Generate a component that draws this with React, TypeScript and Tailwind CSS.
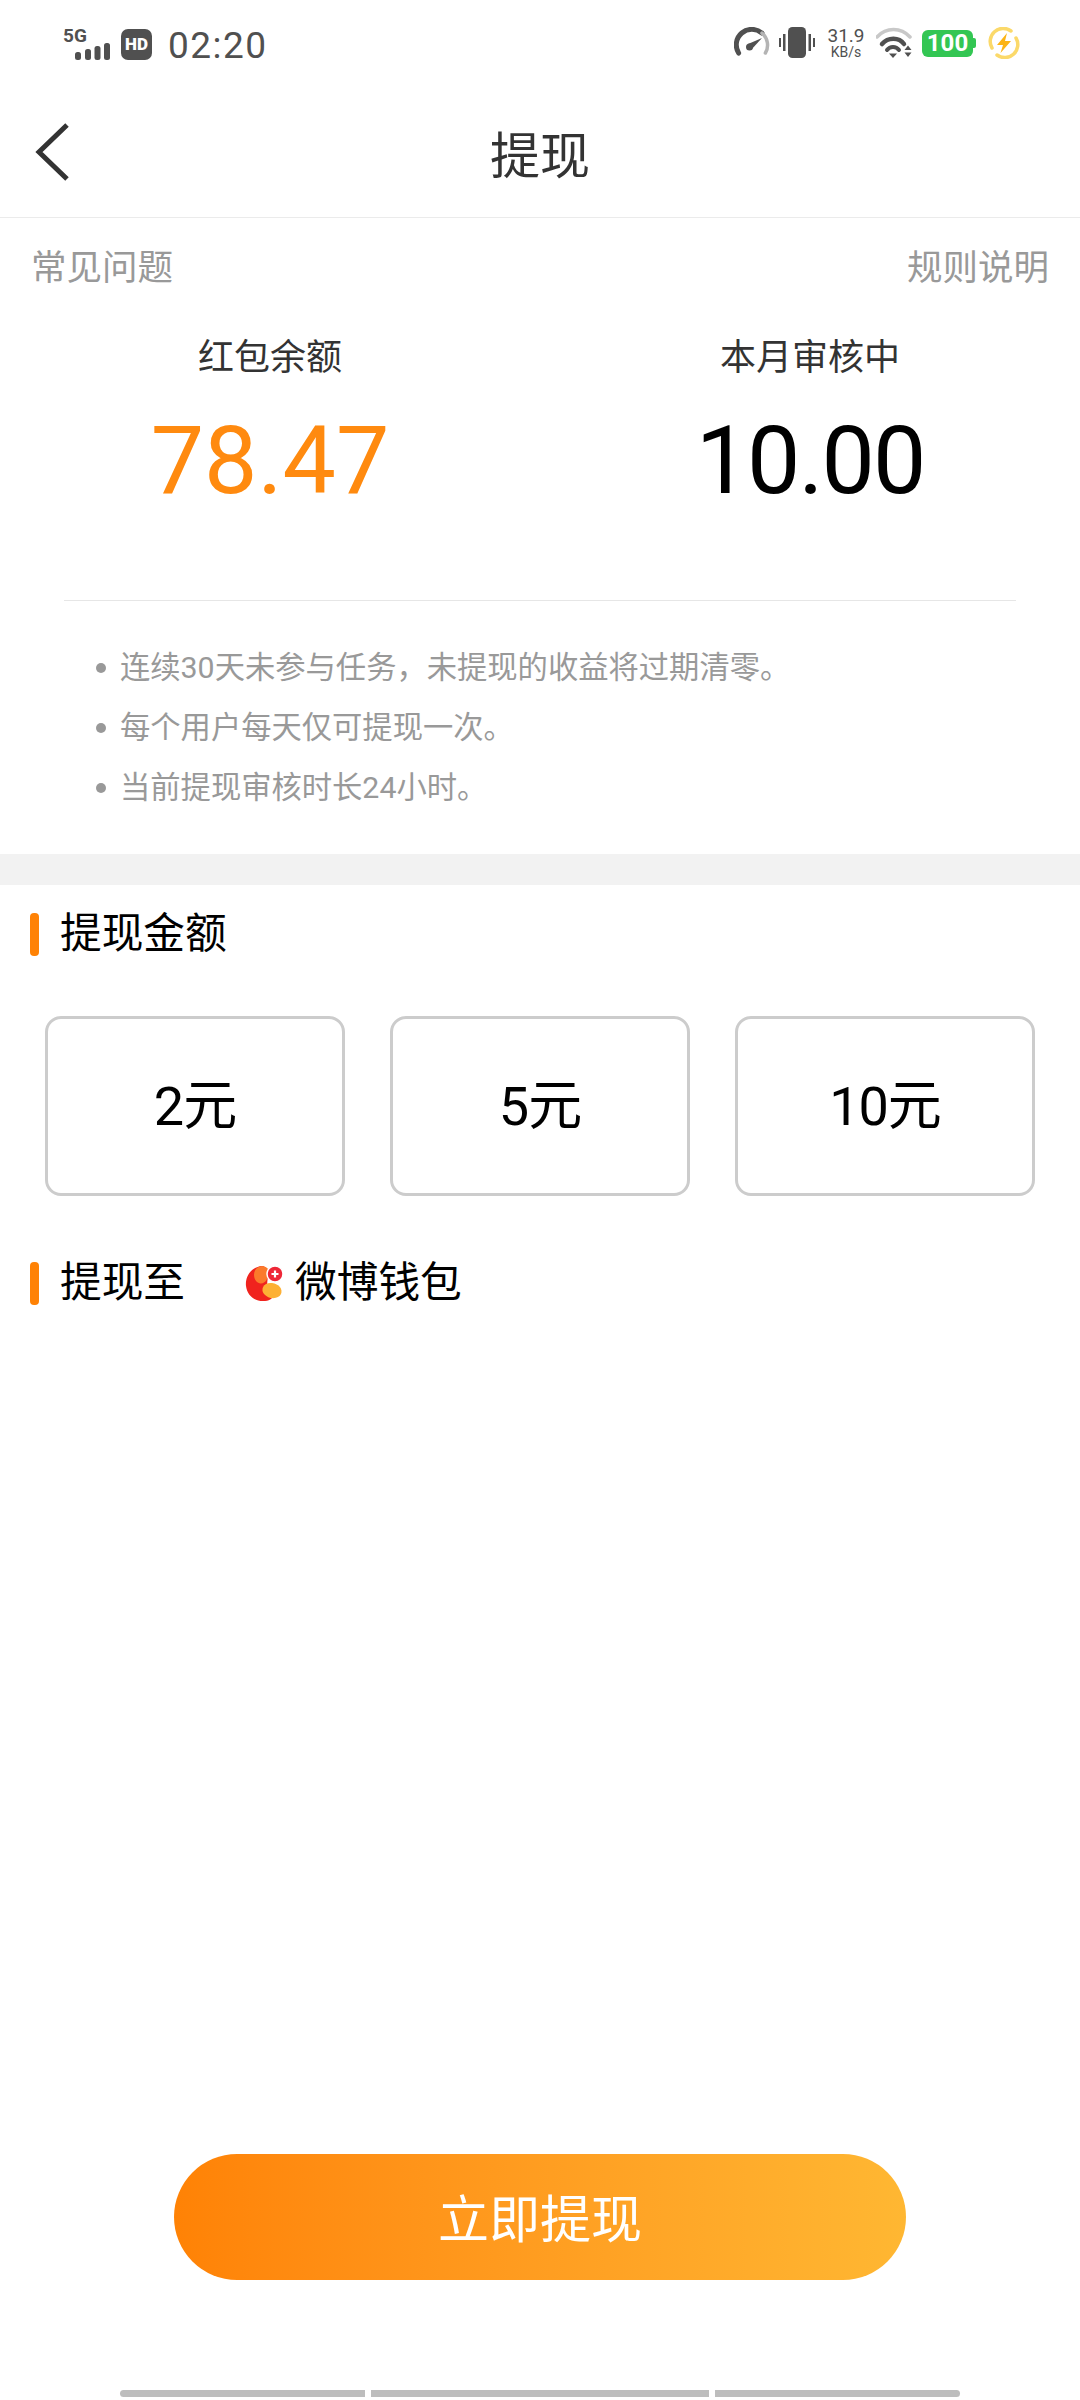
const font = { fontFamily: '"Roboto","Noto Sans CJK SC",sans-serif' };

function Signal() {
  return (
    <div className="flex flex-col w-[48px]">
      <span className="h-[14px] text-[19px] leading-[14px] font-bold text-[#505050]">5G</span>
      <svg width="48" height="18" viewBox="0 14 48 18" className="block">
        <rect x="12" y="23" width="6" height="8" rx="2.5" fill="#505050" />
        <rect x="22" y="20" width="6" height="11" rx="2.5" fill="#505050" />
        <rect x="31.5" y="17" width="6" height="14" rx="2.5" fill="#505050" />
        <rect x="41" y="14" width="6" height="17" rx="2.5" fill="#505050" />
      </svg>
    </div>
  );
}

function Gauge() {
  return (
    <svg width="38" height="32" viewBox="0 0 38 32" fill="none" className="block">
      <path d="M4.6 26A15.5 15.5 0 0 1 28 6.2" stroke="#505050" strokeWidth="5" strokeLinecap="round" />
      <path d="M28 6.2A15.5 15.5 0 0 1 31.4 26" stroke="#b4b4b4" strokeWidth="3.5" strokeLinecap="round" />
      <path d="M14 17L28 11L17 23Z" fill="#505050" />
      <circle cx="15.5" cy="20" r="3.5" fill="#505050" />
    </svg>
  );
}

function Vibrate() {
  return (
    <svg width="36" height="32" viewBox="0 0 36 32" className="block">
      <rect x="9" y="0" width="18" height="31" rx="4.5" fill="#505050" />
      <rect x="0" y="11" width="2" height="9" fill="#505050" />
      <rect x="4" y="7" width="2.5" height="17" fill="#505050" />
      <rect x="29.5" y="7" width="2.5" height="17" fill="#505050" />
      <rect x="34" y="11" width="2" height="9" fill="#505050" />
    </svg>
  );
}

function Wifi() {
  return (
    <svg width="38" height="32" viewBox="0 0 38 32" fill="none" className="block">
      <path d="M1 10C10 0 25 0 34 10" stroke="#c8c8c8" strokeWidth="3.5" strokeLinecap="round" />
      <path d="M6 17C12 10 23 10 28 17" stroke="#505050" strokeWidth="4.5" strokeLinecap="round" />
      <path d="M11 23C14 19 20 19 23 23" stroke="#505050" strokeWidth="4" strokeLinecap="round" />
      <path d="M13 26.5H21L17 31Z" fill="#505050" />
      <path d="M32 18.5L35.5 23H28.5Z M28.5 25.5H35.5L32 30Z" fill="#505050" />
    </svg>
  );
}

function Bolt() {
  return (
    <svg width="32" height="32" viewBox="0 0 32 32" fill="none" className="block">
      <path d="M4 21A13 13 0 0 1 23 4" stroke="#fbd96a" strokeWidth="3.5" strokeLinecap="round" />
      <path d="M28 11A13 13 0 0 1 9 28" stroke="#fbd96a" strokeWidth="3.5" strokeLinecap="round" />
      <path d="M19 6L9 18H15L12.5 26L23 14H17Z" fill="#fcb415" />
    </svg>
  );
}

function WalletLogo() {
  return (
    <svg width="38" height="38" viewBox="0 0 38 38" className="block">
      <path d="M17 2C5 3 0 14 1 22C2 31 9 37 18 37C27 37 31 32 25 27C19 22 25 13 22 6C21 3 19 2 17 2Z" fill="#f0231e" />
      <path d="M17 2C9 3 7 11 11 17C14 21 20 20 22 15C24 10 25 6 22 4C21 3 19 2 17 2Z" fill="#fb7a2b" />
      <path d="M19 30C15 25 19 18 27 19C34 20 38 25 36 30C34 35 24 36 19 30Z" fill="#fdb035" />
      <circle cx="30" cy="10" r="8" fill="#ee2737" stroke="#ffffff" strokeWidth="1.5" />
      <path d="M30 6.5V13.5M26.5 10H33.5" stroke="#ffffff" strokeWidth="2.2" />
    </svg>
  );
}

function SectionTitle({ text }: { text: string }) {
  return (
    <div className="flex items-center">
      <div className="w-[9px] h-[43px] rounded-[4px] bg-[#ff8205]" />
      <span className="ml-[21px] text-[41.7px] leading-[50px] text-black">{text}</span>
    </div>
  );
}

export default function App() {
  return (
    <div className="w-[1080px] h-[2400px] bg-white flex flex-col overflow-hidden" style={font}>
      <div className="h-[90px] shrink-0 flex items-start justify-between pt-[27px] pl-[63px] pr-[60px]">
        <div className="flex items-center">
          <Signal />
          <div className="ml-[10px] w-[31px] h-[31px] rounded-[7px] bg-[#505050] flex items-center justify-center text-white text-[17px] font-black leading-none">HD</div>
          <span className="ml-[16px] pt-[3px] text-[37px] leading-[32px] tracking-[1.5px] text-[#505050]">02:20</span>
        </div>
        <div className="flex items-center">
          <Gauge />
          <div className="ml-[7px]"><Vibrate /></div>
          <div className="ml-[13px] flex flex-col items-center text-[#505050] w-[36px]">
            <span className="text-[19px] leading-[18px]">31.9</span>
            <span className="text-[14px] leading-[14px]">KB/s</span>
          </div>
          <div className="ml-[12px]"><Wifi /></div>
          <div className="ml-[8px] flex items-center">
            <div className="w-[51px] h-[27px] rounded-[6px] bg-[#33c653] text-white text-[24px] font-bold leading-none flex items-center justify-center">100</div>
            <div className="w-[3px] h-[10px] rounded-r-[2px] bg-[#33c653]" />
          </div>
          <div className="ml-[12px]"><Bolt /></div>
        </div>
      </div>

      <div className="relative h-[128px] shrink-0 pt-[6px] border-b border-[#ebebeb] flex items-center justify-center">
        <svg width="38" height="60" viewBox="0 0 38 60" fill="none" className="absolute left-[34px] top-[32px]">
          <path d="M33 3L5 30L33 57" stroke="#333333" strokeWidth="5" />
        </svg>
        <span className="text-[50px] leading-[60px] text-[#333333]">提现</span>
      </div>

      <div className="flex justify-between px-[31px] pt-[27px] text-[35.5px] leading-[46px] text-[#999999]">
        <span>常见问题</span>
        <span>规则说明</span>
      </div>

      <div className="grid grid-cols-2 pt-[44px]">
        <div className="flex flex-col items-center">
          <span className="text-[36px] leading-[46px] text-[#333333]">红包余额</span>
          <span className="mt-[25px] text-[95px] leading-[110px] text-[#ff8a0f]">78.47</span>
        </div>
        <div className="flex flex-col items-center">
          <span className="text-[36px] leading-[46px] text-[#333333]">本月审核中</span>
          <span className="mt-[25px] text-[95px] leading-[110px] tracking-[-2px] text-black">10.00</span>
        </div>
      </div>

      <div className="mt-[84px] mx-[64px] h-px bg-[#e6e6e6]" />

      <ul className="pt-[47px] pl-[96px] flex flex-col gap-[20px] text-[30.3px] leading-[40px] text-[#999999]">
        <li className="flex items-center"><span className="w-[10px] h-[10px] rounded-full bg-[#999999] mr-[14px]" />连续30天未参与任务，未提现的收益将过期清零。</li>
        <li className="flex items-center"><span className="w-[10px] h-[10px] rounded-full bg-[#999999] mr-[14px]" />每个用户每天仅可提现一次。</li>
        <li className="flex items-center"><span className="w-[10px] h-[10px] rounded-full bg-[#999999] mr-[14px]" />当前提现审核时长24小时。</li>
      </ul>

      <div className="mt-[46px] h-[31px] shrink-0 bg-[#f2f2f2]" />

      <div className="pl-[30px] pt-[24px]">
        <SectionTitle text="提现金额" />
      </div>

      <div className="mt-[57px] px-[45px] grid grid-cols-3 gap-[45px]">
        {["2元", "5元", "10元"].map((t) => (
          <div key={t} className="h-[180px] rounded-[16px] border-[3px] border-[#cccccc] flex items-center justify-center text-[54px] tracking-[-1px] text-black">{t}</div>
        ))}
      </div>

      <div className="pl-[30px] pt-[62px] flex items-center">
        <SectionTitle text="提现至" />
        <div className="ml-[60px]"><WalletLogo /></div>
        <span className="ml-[12px] text-[41.7px] leading-[50px] text-black">微博钱包</span>
      </div>

      <div className="flex-1" />

      <div className="flex justify-center">
        <div className="w-[732px] h-[126px] pt-[8px] rounded-full bg-gradient-to-r from-[#ff8205] to-[#ffb732] flex items-center justify-center text-[51px] text-white">立即提现</div>
      </div>

      <div className="mt-[110px] mb-[3px] flex justify-center gap-[6px]">
        <div className="w-[245px] h-[7px] rounded-l-full bg-[#bdbdbd]" />
        <div className="w-[338px] h-[7px] bg-[#bdbdbd]" />
        <div className="w-[245px] h-[7px] rounded-r-full bg-[#bdbdbd]" />
      </div>
    </div>
  );
}
